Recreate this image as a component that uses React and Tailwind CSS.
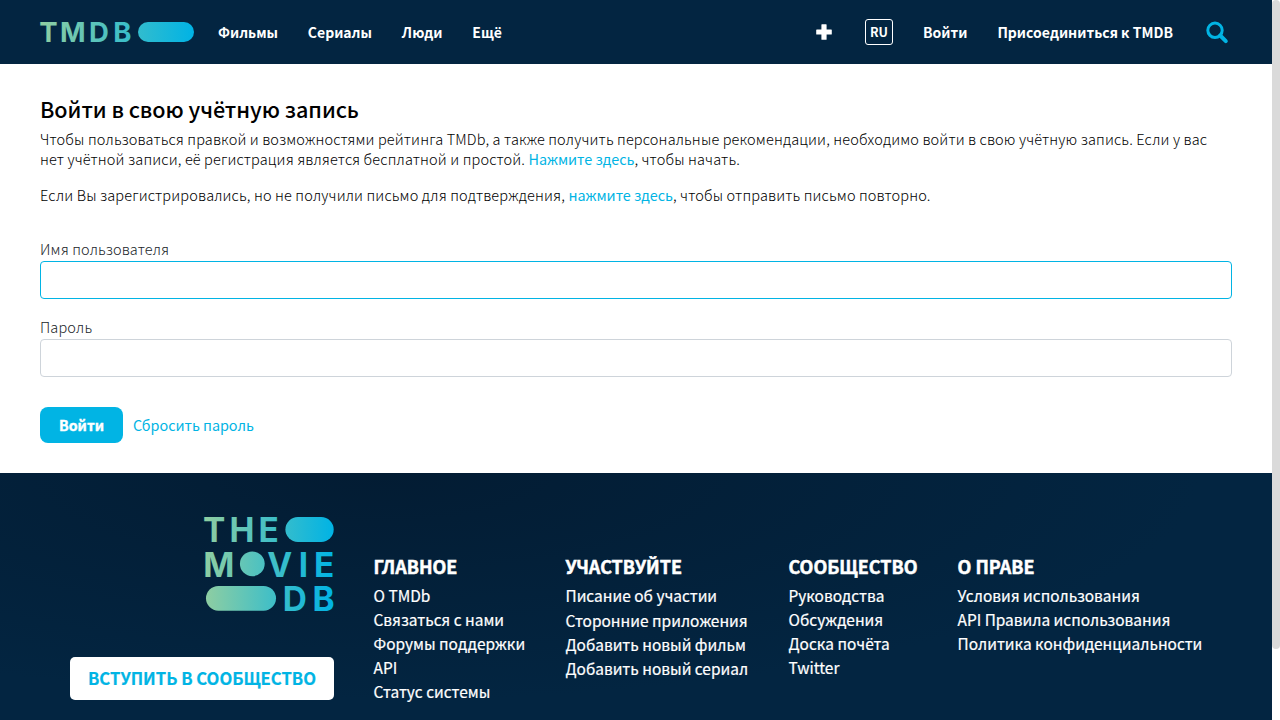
function Letters({ items, size, fill }) {
  return (
    <g fill={fill} textAnchor="middle" fontFamily="Inter, sans-serif" fontWeight="700" fontSize={size}>
      {items.map(([ch, x, y]) => <text key={ch + x} x={x} y={y}>{ch}</text>)}
    </g>
  );
}

function Gradient({ id, x1, x2 }) {
  return (
    <defs>
      <linearGradient id={id} gradientUnits="userSpaceOnUse" x1={x1} y1="0" x2={x2} y2="0">
        <stop offset="0" stopColor="#90cea1" />
        <stop offset="0.56" stopColor="#3cbec9" />
        <stop offset="1" stopColor="#00b3e5" />
      </linearGradient>
    </defs>
  );
}

function HeaderLogo() {
  return (
    <svg width="154" height="20" viewBox="0 0 154 20" className="shrink-0 overflow-visible">
      <Gradient id="hg" x1="0" x2="154" />
      <Letters fill="url(#hg)" size="27.5" items={[["T", 8.3, 20], ["M", 32.7, 20], ["D", 59, 20], ["B", 82.3, 20]]} />
      <rect x="98" y="0" width="56" height="20" rx="10" fill="url(#hg)" />
    </svg>
  );
}

function FooterLogo() {
  return (
    <svg width="130" height="94" viewBox="204 517 130 94" className="overflow-visible">
      <Gradient id="fg" x1="204" x2="334" />
      <Letters
        fill="url(#fg)"
        size="33.4"
        items={[
          ["T", 214.1, 541.7], ["H", 241.9, 541.7], ["E", 268.6, 541.7],
          ["M", 218.9, 576.6], ["V", 279.7, 576.6], ["I", 303.4, 576.6], ["E", 324.2, 576.6],
          ["D", 294.8, 610.6], ["B", 323.6, 610.6],
        ]}
      />
      <g fill="url(#fg)">
        <rect x="285.4" y="517" width="48.3" height="25" rx="12.5" />
        <circle cx="252.3" cy="563.8" r="12.4" />
        <rect x="206" y="586" width="70" height="24.7" rx="12.35" />
      </g>
    </svg>
  );
}

const columns = [
  ["ГЛАВНОЕ", "w-[192px]", "h-6", ["О TMDb", "Связаться с нами", "Форумы поддержки", "API", "Статус системы"]],
  ["УЧАСТВУЙТЕ", "w-[223px]", "h-[25px]", ["Писание об участии", "Сторонние приложения", "Добавить новый фильм", "Добавить новый сериал"]],
  ["СООБЩЕСТВО", "w-[169px]", "h-6", ["Руководства", "Обсуждения", "Доска почёта", "Twitter"]],
  ["О ПРАВЕ", "w-[260px]", "h-6", ["Условия использования", "API Правила использования", "Политика конфиденциальности"]],
];

function InlineLink({ children }) {
  return <a className="text-[14.4px] font-normal tracking-[-0.02px] text-[#01b4e4]">{children}</a>;
}

function Field({ label, className, border, type }) {
  return (
    <label className={`flex flex-col text-[#212529] ${className}`}>
      {label}
      <input type={type} className={`mt-0.5 h-[38px] rounded-[4px] border bg-white outline-none ${border}`} />
    </label>
  );
}

export default function App() {
  return (
    <div className="flex h-[720px] w-[1280px] overflow-hidden bg-white font-['Noto_Sans_CJK_SC',sans-serif]">
      <div className="flex w-[1272px] shrink-0 flex-col">
        <header className="flex h-16 shrink-0 items-center bg-[#032541] pl-10 pr-[43px] text-[14px] font-bold text-white">
          <HeaderLogo />
          <nav className="ml-6 flex gap-[29.8px]">
            <a>Фильмы</a>
            <a>Сериалы</a>
            <a>Люди</a>
            <a>Ещё</a>
          </nav>
          <div className="ml-auto flex items-center whitespace-nowrap">
            <svg width="16" height="16" viewBox="0 0 16 16" fill="#fff" className="mr-[33px]">
              <rect x="5.4" y="0.2" width="5.2" height="15.6" rx="0.6" />
              <rect x="0.2" y="5.4" width="15.6" height="5.2" rx="0.6" />
            </svg>
            <span className="mr-[30px] flex h-[26px] w-7 items-center justify-center rounded-[3px] border border-white text-[12.6px]">RU</span>
            <a className="mr-[30px]">Войти</a>
            <a className="mr-[33px]">Присоединиться к TMDB</a>
            <svg width="23" height="23" viewBox="0 0 23 23" fill="none" stroke="#01b4e4">
              <circle cx="9" cy="9.3" r="7.2" strokeWidth="3" />
              <path d="M14.2 14.5l5.6 5.6" strokeWidth="4" strokeLinecap="round" />
            </svg>
          </div>
        </header>
        <main className="flex h-[409px] shrink-0 flex-col px-10 pt-[29px] text-[14.5px] font-light leading-5 tracking-[0.138px] text-black">
          <h2 className="h-[36px] text-[21.6px] font-medium leading-8 tracking-[-0.04px]">Войти в свою учётную запись</h2>
          <p className="mb-4 whitespace-nowrap">
            Чтобы пользоваться правкой и возможностями рейтинга TMDb, а также получить персональные рекомендации, необходимо войти в свою учётную запись. Если у вас
            <br />
            нет учётной записи, её регистрация является бесплатной и простой. <InlineLink>Нажмите здесь</InlineLink>, чтобы начать.
          </p>
          <p className="whitespace-nowrap">
            Если Вы зарегистрировались, но не получили письмо для подтверждения, <InlineLink>нажмите здесь</InlineLink>, чтобы отправить письмо повторно.
          </p>
          <Field label="Имя пользователя" type="text" className="mt-[34px]" border="border-[#01b4e4]" />
          <Field label="Пароль" type="password" className="mt-[18px]" border="border-[#ced4da]" />
          <div className="mt-[30px] flex items-center whitespace-nowrap">
            <button className="mr-[10px] h-9 w-[83px] rounded-lg bg-[#01b4e4] text-[14.2px] font-bold tracking-normal text-white [-webkit-text-stroke:0.4px_white]">Войти</button>
            <InlineLink>Сбросить пароль</InlineLink>
          </div>
        </main>
        <footer className="flex grow bg-[#032541] bg-[radial-gradient(ellipse_at_30%_0%,#031c33_0%,#032541_65%)] pl-[70px] text-white">
          <div className="flex w-[264px] shrink-0 flex-col items-end pt-[44px]">
            <FooterLogo />
            <button className="mt-[46px] h-[43px] w-[264px] whitespace-nowrap rounded-[5px] bg-white text-[16.65px] font-bold text-[#01b4e4] [-webkit-text-stroke:0.2px_#01b4e4]">ВСТУПИТЬ В СООБЩЕСТВО</button>
          </div>
          <div className="flex pl-[39.5px] pt-[81px]">
            {columns.map(([title, width, firstHeight, items]) => (
              <div key={title} className={width}>
                <h3 className="text-[17.95px] font-bold leading-6 [-webkit-text-stroke:0.5px_white]">{title}</h3>
                <ul className="mt-[5px] whitespace-nowrap text-[15.45px] font-normal leading-6 [-webkit-text-stroke:0.2px_white]">
                  {items.map((t, i) => <li key={t} className={i === 0 ? firstHeight : "h-6"}><a>{t}</a></li>)}
                </ul>
              </div>
            ))}
          </div>
        </footer>
      </div>
      <div className="w-2 shrink-0 bg-white"><div className="h-[649px] rounded-full bg-[#dadada]" /></div>
    </div>
  );
}
